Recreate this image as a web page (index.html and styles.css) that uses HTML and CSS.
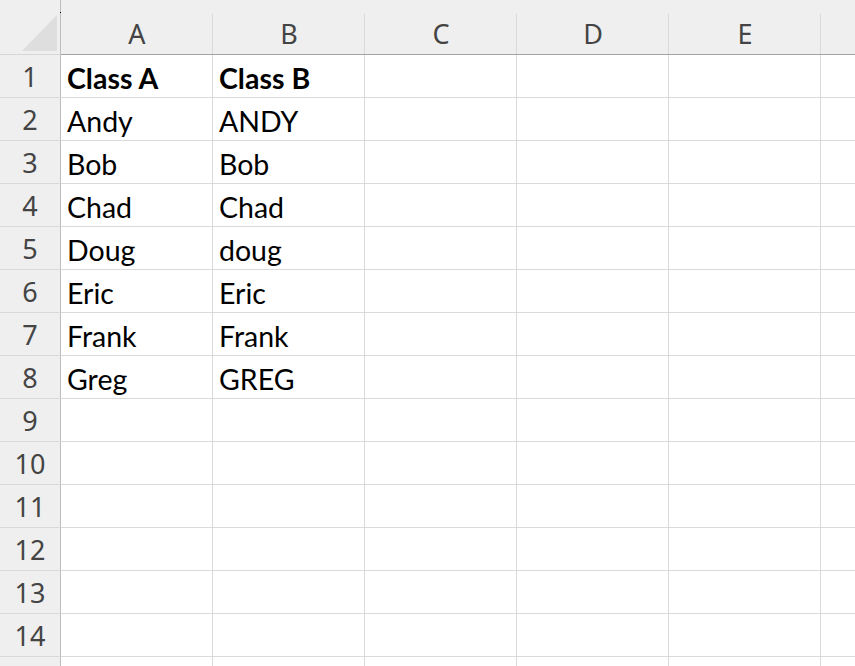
FILE: index.html
```html
<!DOCTYPE html>
<html>
<head>
<meta charset="utf-8">
<link rel="stylesheet" href="styles.css">
</head>
<body>
<div class="sheet">
  <div class="corner"><span class="dot"></span><span class="tri"></span></div>
  <div class="ch">A</div><div class="ch">B</div><div class="ch">C</div><div class="ch">D</div><div class="ch">E</div><div class="ch last"></div>

  <div class="rh">1</div><div class="c b">Class A</div><div class="c b">Class B</div><div class="c"></div><div class="c"></div><div class="c"></div><div class="c"></div>
  <div class="rh">2</div><div class="c">Andy</div><div class="c">ANDY</div><div class="c"></div><div class="c"></div><div class="c"></div><div class="c"></div>
  <div class="rh">3</div><div class="c">Bob</div><div class="c">Bob</div><div class="c"></div><div class="c"></div><div class="c"></div><div class="c"></div>
  <div class="rh">4</div><div class="c">Chad</div><div class="c">Chad</div><div class="c"></div><div class="c"></div><div class="c"></div><div class="c"></div>
  <div class="rh">5</div><div class="c">Doug</div><div class="c">doug</div><div class="c"></div><div class="c"></div><div class="c"></div><div class="c"></div>
  <div class="rh">6</div><div class="c">Eric</div><div class="c">Eric</div><div class="c"></div><div class="c"></div><div class="c"></div><div class="c"></div>
  <div class="rh">7</div><div class="c">Frank</div><div class="c">Frank</div><div class="c"></div><div class="c"></div><div class="c"></div><div class="c"></div>
  <div class="rh">8</div><div class="c">Greg</div><div class="c">GREG</div><div class="c"></div><div class="c"></div><div class="c"></div><div class="c"></div>
  <div class="rh">9</div><div class="c"></div><div class="c"></div><div class="c"></div><div class="c"></div><div class="c"></div><div class="c"></div>
  <div class="rh">10</div><div class="c"></div><div class="c"></div><div class="c"></div><div class="c"></div><div class="c"></div><div class="c"></div>
  <div class="rh">11</div><div class="c"></div><div class="c"></div><div class="c"></div><div class="c"></div><div class="c"></div><div class="c"></div>
  <div class="rh">12</div><div class="c"></div><div class="c"></div><div class="c"></div><div class="c"></div><div class="c"></div><div class="c"></div>
  <div class="rh">13</div><div class="c"></div><div class="c"></div><div class="c"></div><div class="c"></div><div class="c"></div><div class="c"></div>
  <div class="rh">14</div><div class="c"></div><div class="c"></div><div class="c"></div><div class="c"></div><div class="c"></div><div class="c"></div>
  <div class="rh"></div><div class="c"></div><div class="c"></div><div class="c"></div><div class="c"></div><div class="c"></div><div class="c"></div>
</div>
</body>
</html>
```
FILE: styles.css
```css
html, body {
  margin: 0;
  padding: 0;
  background: #ffffff;
  overflow: hidden;
}
.sheet {
  display: grid;
  grid-template-columns: 61px repeat(6, 152px);
  grid-template-rows: 55px repeat(15, 43px);
  width: 855px;
  height: 666px;
  overflow: hidden;
}
.corner {
  position: relative;
  background: #efefef;
  border-right: 1px solid #bdbdbd;
  border-bottom: 1px solid #d6d6d6;
  box-sizing: border-box;
}
.corner .dot {
  position: absolute;
  left: 60px;
  top: 12px;
  width: 1px;
  height: 1px;
  background: #000;
}
.corner .tri {
  position: absolute;
  left: 22px;
  top: 15px;
  width: 0;
  height: 0;
  border-left: 35px solid transparent;
  border-bottom: 36px solid #dedede;
}
.ch {
  position: relative;
  background: #efefef;
  border-bottom: 1px solid #a3a3a3;
  box-sizing: border-box;
  display: flex;
  align-items: flex-end;
  justify-content: center;
  padding-bottom: 1px;
  font-family: "Noto Sans", sans-serif;
  font-size: 27px;
  line-height: 38px;
  color: #444444;
}
.ch::after {
  content: "";
  position: absolute;
  right: 0;
  top: 14px;
  bottom: 0;
  width: 1px;
  background: #d9d9d9;
}
.rh {
  background: #efefef;
  border-right: 1px solid #bdbdbd;
  border-bottom: 1px solid #d9d9d9;
  box-sizing: border-box;
  display: flex;
  align-items: center;
  justify-content: center;
  font-family: "Noto Sans", sans-serif;
  font-size: 27px;
  color: #444444;
  padding-top: 1px;
}
.c {
  border-right: 1px solid #dadada;
  border-bottom: 1px solid #dadada;
  box-sizing: border-box;
  display: flex;
  align-items: flex-end;
  padding-left: 6px;
  padding-bottom: 1px;
  font-family: "Lato", sans-serif;
  font-size: 28.5px;
  line-height: 36px;
  color: #000000;
  white-space: nowrap;
}
.c.b {
  font-weight: 700;
}
```
